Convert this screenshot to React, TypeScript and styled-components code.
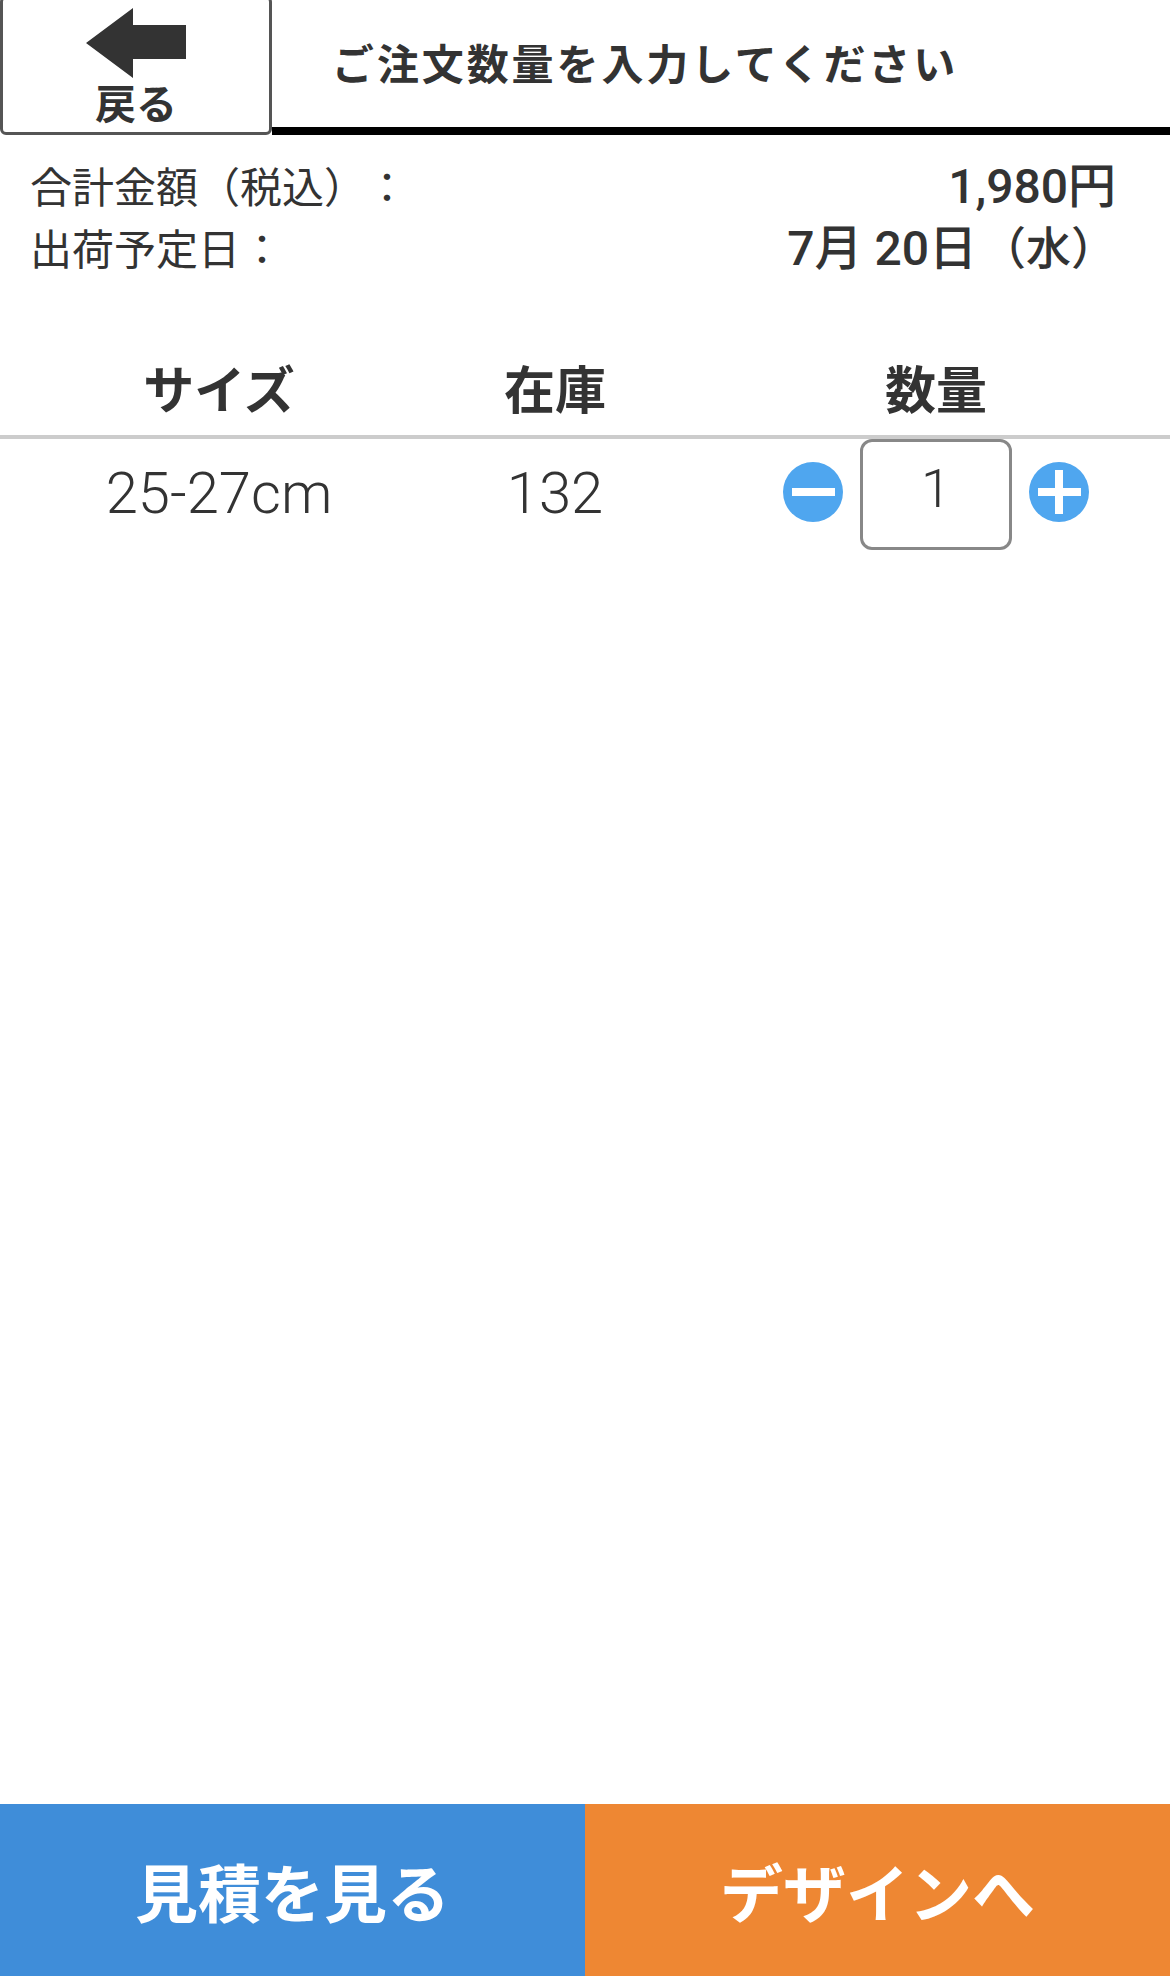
import styled, { createGlobalStyle } from 'styled-components';

const GlobalStyle = createGlobalStyle`
  html, body {
    margin: 0;
    padding: 0;
    background: #fff;
  }
  * {
    box-sizing: border-box;
  }
`;

const Page = styled.div`
  width: 1170px;
  height: 1976px;
  display: flex;
  flex-direction: column;
  color: #333;
  font-family: 'Liberation Sans', 'Noto Sans CJK JP', sans-serif;
`;

const Header = styled.header`
  display: flex;
  height: 135px;
`;

const BackButton = styled.button`
  width: 272px;
  height: 139px;
  margin-top: -4px;
  padding: 9px 0 0;
  display: flex;
  flex-direction: column;
  align-items: center;
  background: #fff;
  border: 3px solid #555;
  border-radius: 6px;
  color: #333;
  font-family: inherit;
  font-size: 41px;
  font-weight: 700;
  line-height: 44px;
`;

const BackArrow = styled.svg`
  width: 100px;
  height: 70px;
  margin-bottom: 5px;
`;

const Title = styled.h1`
  flex: 1;
  margin: 0;
  padding: 0 0 4px 60px;
  display: flex;
  align-items: center;
  border-bottom: 8px solid #000;
  font-size: 42px;
  font-weight: 700;
  letter-spacing: 2.9px;
`;

const Summary = styled.section`
  padding: 18px 54px 0 30px;
`;

const SummaryRow = styled.div`
  display: flex;
  justify-content: space-between;
  height: 62px;
  align-items: center;
  font-size: 42px;
`;

const Colon = styled.span<{ $gap: number }>`
  margin-left: ${(props) => props.$gap}px;
`;

const SummaryValue = styled.span`
  padding-bottom: 4px;
  font-family: Roboto, 'Noto Sans CJK JP', sans-serif;
  font-weight: 500;
  font-size: 48px;
`;

const Weekday = styled.span`
  margin-left: 4px;
  font-size: 45px;
`;

const StockTable = styled.section`
  margin-top: 67px;
`;

const TableRow = styled.div`
  display: grid;
  grid-template-columns: 438px 234px 1fr;
  align-items: center;
`;

const HeadRow = styled(TableRow)`
  height: 95px;
  padding-bottom: 6px;
  border-bottom: 4px solid #ccc;
`;

const HeadCell = styled.div<{ $inset?: boolean }>`
  text-align: center;
  padding-left: ${(props) => (props.$inset ? '30px' : '0')};
  font-size: 51px;
  font-weight: 700;
`;

const BodyCell = styled.div`
  text-align: center;
  padding-bottom: 4px;
  font-family: Roboto, 'Liberation Sans', sans-serif;
  font-size: 58px;
  font-weight: 300;
`;

const Stepper = styled.div`
  display: flex;
  justify-content: center;
  align-items: center;
  gap: 17px;
  padding-left: 30px;
`;

const RoundIcon = styled.svg`
  width: 60px;
  height: 60px;
  margin-bottom: 5px;
  flex: none;
`;

const QtyBox = styled.div`
  width: 152px;
  height: 111px;
  padding-bottom: 12px;
  display: flex;
  justify-content: center;
  align-items: center;
  border: 3px solid #888;
  border-radius: 12px;
  font-family: Roboto, 'Liberation Sans', sans-serif;
  font-size: 54px;
  font-weight: 300;
`;

const Spacer = styled.div`
  flex: 1;
`;

const Footer = styled.footer`
  display: grid;
  grid-template-columns: 1fr 1fr;
  height: 172px;
`;

const FooterButton = styled.button<{ $color: string }>`
  border: 0;
  padding: 0 0 2px;
  background: ${(props) => props.$color};
  color: #fff;
  font-family: inherit;
  font-size: 63px;
  font-weight: 700;
`;

function App() {
  return (
    <Page>
      <GlobalStyle />
      <Header>
        <BackButton>
          <BackArrow viewBox="0 0 100 70">
            <path d="M0 35 L47 0 V17 H100 V51 H47 V70 Z" fill="#333" />
          </BackArrow>
          戻る
        </BackButton>
        <Title>ご注文数量を入力してください</Title>
      </Header>

      <Summary>
        <SummaryRow>
          <span>
            合計金額（税込）<Colon $gap={21}>：</Colon>
          </span>
          <SummaryValue>1,980円</SummaryValue>
        </SummaryRow>
        <SummaryRow>
          <span>
            出荷予定日<Colon $gap={1}>：</Colon>
          </span>
          <SummaryValue>
            7月 20日<Weekday>（水）</Weekday>
          </SummaryValue>
        </SummaryRow>
      </Summary>

      <StockTable>
        <HeadRow>
          <HeadCell>サイズ</HeadCell>
          <HeadCell>在庫</HeadCell>
          <HeadCell $inset>数量</HeadCell>
        </HeadRow>
        <TableRow>
          <BodyCell>25-27cm</BodyCell>
          <BodyCell>132</BodyCell>
          <Stepper>
            <RoundIcon viewBox="0 0 60 60">
              <circle cx="30" cy="30" r="30" fill="#4fa6ef" />
              <rect x="9" y="26" width="43" height="8" fill="#fff" />
            </RoundIcon>
            <QtyBox>1</QtyBox>
            <RoundIcon viewBox="0 0 60 60">
              <circle cx="30" cy="30" r="30" fill="#4fa6ef" />
              <rect x="9" y="26" width="43" height="8" fill="#fff" />
              <rect x="26" y="8" width="8" height="44" fill="#fff" />
            </RoundIcon>
          </Stepper>
        </TableRow>
      </StockTable>

      <Spacer />

      <Footer>
        <FooterButton $color="#3f8dd9">見積を見る</FooterButton>
        <FooterButton $color="#ee8733">デザインへ</FooterButton>
      </Footer>
    </Page>
  );
}

export default App;
